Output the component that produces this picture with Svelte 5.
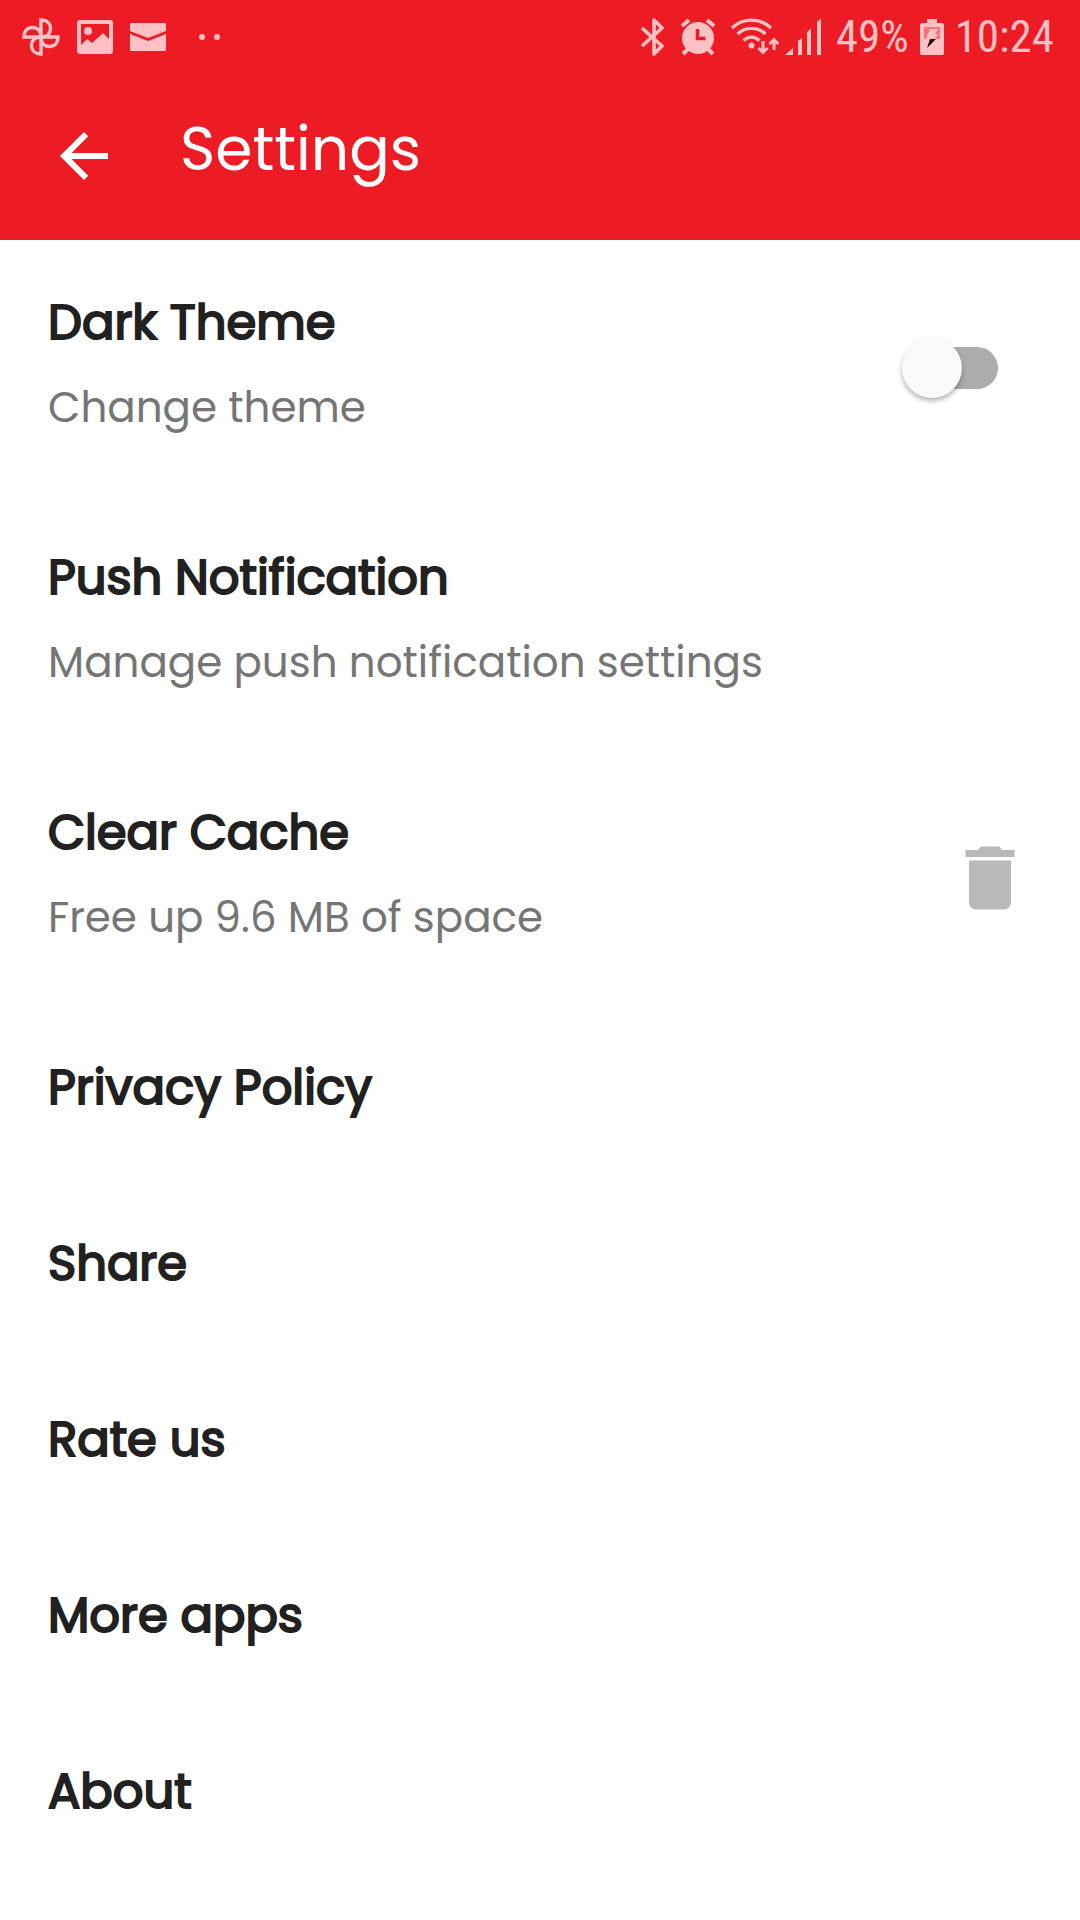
<script lang="ts">
    let darkTheme = $state(false);

    const links = ['Privacy Policy', 'Share', 'Rate us', 'More apps', 'About'];
</script>

<div class="screen">
    <header>
        <div class="status">
            <div class="group notices">
                <svg width="38" height="38" viewBox="0 0 38 38" fill="none" stroke="currentColor" stroke-width="3.4">
                    <path d="M19 19V2c6 0 9.500 3.500 9.500 8.500S25 19 19 19z" />
                    <path d="M19 19h17c0 6-3.500 9.500-8.500 9.500S19 25 19 19z" />
                    <path d="M19 19v17c-6 0-9.500-3.500-9.500-8.500S13 19 19 19z" />
                    <path d="M19 19H2c0-6 3.500-9.500 8.500-9.500S19 13 19 19z" />
                </svg>
                <svg width="36" height="34" viewBox="0 0 36 34">
                    <path fill="currentColor" fill-rule="evenodd" d="M3 0h30a3 3 0 0 1 3 3v28a3 3 0 0 1-3 3H3a3 3 0 0 1-3-3V3a3 3 0 0 1 3-3zM4 4v21l6-6 5 4 11-10 6 6V4z" />
                    <circle cx="11" cy="11" r="4" fill="currentColor" />
                </svg>
                <svg width="36" height="28" viewBox="0 0 36 28" fill="currentColor">
                    <path d="M1 0h34a1 1 0 0 1 1 1v7l-18 7L0 8V1a1 1 0 0 1 1-1z" />
                    <path d="M0 11l18 7 18-7v16a1 1 0 0 1-1 1H1a1 1 0 0 1-1-1z" />
                </svg>
                <svg width="40" height="8" viewBox="0 0 40 8" fill="currentColor">
                    <circle cx="19" cy="4" r="3" />
                    <circle cx="34" cy="4" r="3" />
                </svg>
            </div>
            <div class="group">
                <svg width="24" height="38" viewBox="0 0 24 38" fill="none" stroke="currentColor" stroke-width="3.6" stroke-linejoin="round">
                    <path d="M1 10l20 18-8 8V2l8 8L1 28" />
                </svg>
                <svg width="36" height="38" viewBox="0 0 36 38">
                    <circle cx="18" cy="20" r="16" fill="currentColor" />
                    <path d="M2 8l7-6M34 8l-7-6M8 31l-5 5M28 31l5 5" stroke="currentColor" stroke-width="4" />
                    <path d="M17.500 11v9.500h8" fill="none" stroke="#ed1c24" stroke-width="3.6" />
                </svg>
                <div class="signals">
                    <svg width="48" height="38" viewBox="0 0 48 38" fill="none" stroke="currentColor" stroke-width="3.4">
                        <path d="M1 10c11-10.500 28-10.500 39 0" />
                        <path d="M6.500 16c8-7.500 20-7.500 28 0" />
                        <path d="M12.500 22.500c5-4.500 11-4.500 16 0" />
                        <circle cx="20.500" cy="27.500" r="3" fill="currentColor" stroke="none" />
                        <path d="M32 23v11M27.500 30l4.500 4.500 4.500-4.500M43 32V22M38.500 26l4.500-4.500 4.500 4.500" stroke-width="3" />
                    </svg>
                    <svg width="36" height="38" viewBox="0 0 36 38" fill="currentColor">
                        <path d="M0 37l8-7v7zM13 23l4-3v17h-4zM22 14l4-3.500V37h-4zM32 4l4-3.500V37h-4z" />
                    </svg>
                </div>
                <div class="readings">
                    <span>49%</span>
                    <svg width="24" height="38" viewBox="0 0 24 38">
                        <path d="M7 1h10v4h5a2 2 0 0 1 2 2v28a2 2 0 0 1-2 2H2a2 2 0 0 1-2-2V7a2 2 0 0 1 2-2h5z" fill="currentColor" />
                        <path d="M4 9h16v12H4z" fill="#f4757b" />
                        <path d="M10 11h8l-3 5h3l-3 5H6z" fill="currentColor" />
                        <path d="M10 21h6L7 30z" fill="#240508" />
                    </svg>
                    <span>10:24</span>
                </div>
            </div>
        </div>
        <div class="bar">
            <button class="back" aria-label="Back">
                <svg width="72" height="72" viewBox="0 0 24 24" fill="currentColor">
                    <path d="M20 11H7.830l5.590-5.590L12 4l-8 8 8 8 1.410-1.410L7.830 13H20z" />
                </svg>
            </button>
            <h1>Settings</h1>
        </div>
    </header>

    <main>
        <label class="row">
            <span class="text">
                <span class="title">Dark Theme</span>
                <span class="sub">Change theme</span>
            </span>
            <input type="checkbox" role="switch" bind:checked={darkTheme} />
        </label>
        <button class="row">
            <span class="text">
                <span class="title">Push Notification</span>
                <span class="sub">Manage push notification settings</span>
            </span>
        </button>
        <button class="row">
            <span class="text">
                <span class="title">Clear Cache</span>
                <span class="sub">Free up 9.6 MB of space</span>
            </span>
            <svg class="trash" width="84" height="84" viewBox="0 0 24 24" fill="currentColor">
                <path d="M6 19c0 1.100.9 2 2 2h8c1.100 0 2-.9 2-2V7H6zM19 4h-3.500l-1-1h-5l-1 1H5v2h14z" />
            </svg>
        </button>
        {#each links as link}
            <button class="row"><span class="title">{link}</span></button>
        {/each}
    </main>
</div>

<style>
    :global(body) {
        margin: 0;
        background: #fff;
    }
    .screen {
        font-family: Poppins, Inter, sans-serif;
        color: #212121;
    }
    header {
        background: #ed1c24;
        color: #fff;
    }
    .status {
        display: flex;
        justify-content: space-between;
        box-sizing: border-box;
        height: 72px;
        padding: 2px 26px 0 22px;
        color: #fdc0c4;
        font-family: "Roboto Condensed", "Liberation Sans Narrow", Roboto, sans-serif;
        font-size: 45px;
        line-height: 76px;
    }
    .group {
        display: flex;
        align-items: center;
        gap: 15px;
    }
    .notices {
        gap: 17px;
    }
    .signals {
        display: flex;
        gap: 6px;
    }
    .readings {
        display: flex;
        align-items: center;
        gap: 11px;
    }
    svg {
        display: block;
        flex: none;
    }
    button {
        border: 0;
        background: none;
        color: inherit;
        font: inherit;
        text-align: left;
        cursor: pointer;
    }
    .bar {
        display: flex;
        align-items: center;
        gap: 60px;
        height: 168px;
        padding: 0 48px;
    }
    .back {
        padding: 0;
    }
    h1 {
        margin: 0;
        padding-bottom: 14px;
        font-size: 60px;
        font-weight: 400;
        line-height: 80px;
    }
    .row {
        display: flex;
        align-items: center;
        justify-content: space-between;
        box-sizing: border-box;
        width: 100%;
        padding: 0 48px;
        cursor: pointer;
    }
    .text {
        display: flex;
        flex-direction: column;
    }
    .row > .text {
        padding: 41px 0 44px;
    }
    .row > .title {
        padding: 41px 0 51px;
    }
    /* regular weight thickened with a stroke, keeps the regular widths */
    .title {
        font-size: 48px;
        line-height: 84px;
        -webkit-text-stroke: 2px currentColor;
    }
    .sub {
        color: #757575;
        font-size: 42px;
        line-height: 86px;
    }
    .trash {
        color: #b9b9b9;
    }
    input {
        appearance: none;
        display: grid;
        align-items: center;
        width: 96px;
        height: 60px;
        margin: 0 34px 0 0;
        cursor: pointer;
    }
    input::before, input::after {
        content: '';
        grid-area: 1 / 1;
    }
    input::before {
        height: 42px;
        margin-left: 8px;
        border-radius: 21px;
        background: #acacac;
    }
    input::after {
        width: 60px;
        height: 60px;
        border-radius: 50%;
        background: #fafafa;
        box-shadow: 0 3px 5px rgba(0, 0, 0, 0.3);
    }
    input:checked::before {
        background: #f58f93;
    }
    input:checked::after {
        justify-self: end;
        background: #ed1c24;
    }
</style>
